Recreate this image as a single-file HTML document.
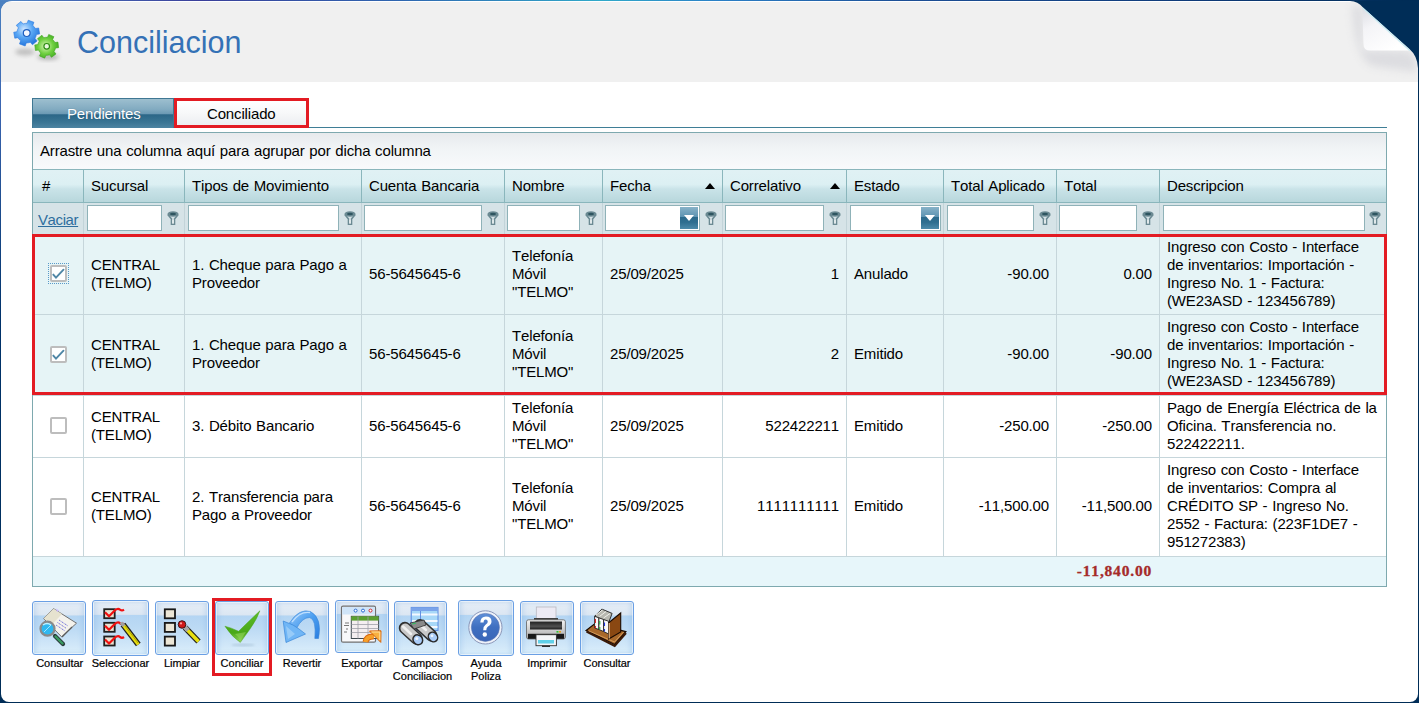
<!DOCTYPE html>
<html><head><meta charset="utf-8">
<style>
*{box-sizing:border-box;margin:0;padding:0}
html,body{width:1419px;height:703px;overflow:hidden;background:#002d57;font-family:"Liberation Sans",sans-serif;font-kerning:none}
.a{position:absolute}
.t{position:absolute;font-size:15px;letter-spacing:-0.15px;word-spacing:0.7px;color:#000;white-space:nowrap;line-height:18px}
#page{position:absolute;left:1px;top:1px;width:1417px;height:701px;background:#fff;border-radius:11px 0 8px 8px;overflow:hidden}
#hdr{position:absolute;left:0;top:1px;width:1417px;height:80px;background:#f0f0f0}
#ledge{position:absolute;left:0;top:0;width:1px;height:703px;background:linear-gradient(#4a80c0 0,#3a64b0 110px,#1a4a8a 220px,#00326a 320px,#002d57 703px)}
#tlc{position:absolute;left:0;top:0;width:14px;height:14px;background:#4a80c0}
#topline{position:absolute;left:0;top:0;width:1419px;height:1px;background:linear-gradient(90deg,#4d84c4 0,#3a3f9a 200px,#2e66b0 400px,#30a9c9 600px,#2a7fc6 720px,#1c4f96 900px,#0e3a78 1200px,#002d57 1419px)}
#title{position:absolute;left:77px;top:24px;font-size:30.5px;line-height:36px;color:#3471b6;white-space:nowrap}
.tabP{position:absolute;left:32px;top:98px;width:142px;height:30px;background:linear-gradient(#9dbfcf 0,#82abc1 35%,#6a98b3 52%,#2b6687 54%,#3a7594 80%,#4d84a2 100%);border:1px solid #3f7793;border-bottom:none}
.tabC{position:absolute;left:174px;top:98px;width:135px;height:30px;border:3px solid #e31b23;background:linear-gradient(#ffffff 0,#f7f8f9 50%,#eceef1 100%)}
.tabline{position:absolute;left:309px;top:127px;width:1078px;height:1px;background:#3f7e96}
.grid{position:absolute;left:32px;top:132px;width:1355px;height:455px;border:1px solid #7ea9af;background:#fff}
.grp{position:absolute;left:33px;top:133px;width:1353px;height:36px;background:linear-gradient(#e7eaed 0,#f1f4f6 45%,#f8fafc 100%)}
.hrow{position:absolute;left:33px;top:169px;width:1353px;height:34px;border-top:1px solid #8ab6bc;border-bottom:1px solid #8ab6bc;background:linear-gradient(#e0f1f4 0,#dcf0f3 45%,#c9e3e8 60%,#b8d7dc 100%)}
.frow{position:absolute;left:33px;top:203px;width:1353px;height:31px;background:#d6e3e7}
.hdiv{position:absolute;top:170px;width:1px;height:32px;background:#8ab6bc}
.fdiv{position:absolute;top:203px;width:1px;height:31px;background:#c3d4d9}
.inp{position:absolute;top:205px;height:26px;background:#fff;border:1px solid #8fb2b8}
.dd{position:absolute;top:207px;width:18px;height:22px;background:linear-gradient(#88b2c8 0,#5e94b2 44%,#2b6a8c 47%,#2f6e90 70%,#4c8aaa 100%);}
.dd:after{content:"";position:absolute;left:4px;top:8px;border-left:5px solid transparent;border-right:5px solid transparent;border-top:6px solid #fff}
.sort{position:absolute;top:183px;width:0;height:0;border-left:5px solid transparent;border-right:5px solid transparent;border-bottom:6px solid #000}
.row{position:absolute;left:33px;width:1353px}
.rl{position:absolute;left:33px;width:1353px;height:1px;background:#c6d6db}
.cdiv{position:absolute;width:1px;background:#c6d6db}
.red{position:absolute;border:3px solid #e31b23}
.cb{position:absolute;left:50px;width:17px;height:17px;border:2px solid #bdbdbd;border-radius:2px;background:#fff}
.foot{position:absolute;left:33px;top:557px;width:1353px;height:29px;background:#e7f6fa}
.btn{position:absolute;border:1px solid #6a9fe4;border-radius:3px;background:linear-gradient(#e6eef7 0,#dce7f3 24%,#d6e3f0 25.5%,#b4d5f3 26.5%,#bcdaf4 50%,#d2e8f9 85%,#dcf0fb 100%);box-shadow:inset 0 0 0 1px rgba(255,255,255,.55),inset 3px 0 4px rgba(120,170,225,.25),inset -3px 0 4px rgba(120,170,225,.25)}
.lbl{position:absolute;-webkit-text-stroke:0.2px #000;font-size:11px;line-height:12.5px;color:#000;text-align:center;white-space:nowrap}
</style></head><body>
<div id="tlc"></div><div id="ledge"></div><div id="topline"></div>
<div id="page"><div id="hdr"></div></div>
<div id="title">Conciliacion</div>
<svg class="a" style="left:10px;top:15px" width="55" height="50" viewBox="0 0 55 50">
<defs>
<radialGradient id="gb" cx="0.4" cy="0.35" r="0.7"><stop offset="0" stop-color="#cfe6ff"/><stop offset="0.45" stop-color="#5aa8f5"/><stop offset="1" stop-color="#1f6fd8"/></radialGradient>
<radialGradient id="gg" cx="0.45" cy="0.5" r="0.7"><stop offset="0" stop-color="#d9f5b8"/><stop offset="0.45" stop-color="#6fd040"/><stop offset="1" stop-color="#2e9a12"/></radialGradient>
<filter id="bl" x="-50%" y="-50%" width="200%" height="200%"><feGaussianBlur stdDeviation="2.2"/></filter>
</defs>
<ellipse cx="15" cy="37" rx="10" ry="3.5" fill="#9a9a9a" opacity="0.55" filter="url(#bl)"/>
<ellipse cx="38" cy="42" rx="11" ry="3" fill="#8a8a8a" opacity="0.6" filter="url(#bl)"/>
<path d="M24.40 12.03 L25.37 13.54 L28.65 12.97 L29.67 18.95 L26.40 19.51 L25.98 21.25 L25.80 21.73 L24.99 23.33 L27.11 25.88 L22.45 29.76 L20.33 27.20 L18.61 27.71 L18.10 27.80 L16.31 27.89 L15.17 31.01 L9.48 28.91 L10.63 25.80 L9.33 24.56 L9.00 24.17 L8.03 22.66 L4.75 23.23 L3.73 17.25 L7.00 16.69 L7.42 14.95 L7.60 14.47 L8.41 12.87 L6.29 10.32 L10.95 6.44 L13.07 9.00 L14.79 8.49 L15.30 8.40 L17.09 8.31 L18.23 5.19 L23.92 7.29 L22.77 10.40 L24.07 11.64Z" fill="url(#gb)" stroke="#2a78e0" stroke-width="0.6"/>
<circle cx="16.7" cy="18.1" r="3.4" fill="#f4f8ff" stroke="#1e5fc0" stroke-width="1.2"/>
<path d="M44.04 26.09 L44.87 27.51 L47.95 27.12 L48.62 32.68 L45.53 33.04 L45.07 34.62 L44.88 35.05 L44.06 36.48 L45.94 38.95 L41.46 42.32 L39.61 39.82 L38.01 40.20 L37.54 40.26 L35.90 40.26 L34.69 43.13 L29.54 40.93 L30.78 38.08 L29.64 36.89 L29.36 36.51 L28.53 35.09 L25.45 35.48 L24.78 29.92 L27.87 29.56 L28.33 27.98 L28.52 27.55 L29.34 26.12 L27.46 23.65 L31.94 20.28 L33.79 22.78 L35.39 22.40 L35.86 22.34 L37.50 22.34 L38.71 19.47 L43.86 21.67 L42.62 24.52 L43.76 25.71Z" fill="url(#gg)" stroke="#3aa41c" stroke-width="0.6"/>
<circle cx="36.7" cy="31.3" r="2.8" fill="#eaf8e0" stroke="#2a8a10" stroke-width="1.2"/>
</svg>
<svg class="a" style="left:1330px;top:0px" width="89" height="90" viewBox="0 0 89 90">
<defs>
<linearGradient id="fl" x1="0" y1="0" x2="0.6" y2="1"><stop offset="0" stop-color="#dcdde3"/><stop offset="0.4" stop-color="#f4f4f7"/><stop offset="1" stop-color="#ffffff"/></linearGradient>
<linearGradient id="shl" x1="0" y1="0" x2="1" y2="0"><stop offset="0" stop-color="#f0f0f0" stop-opacity="0"/><stop offset="1" stop-color="#cfd0d6"/></linearGradient>
<linearGradient id="shb" x1="0" y1="0" x2="0" y2="1"><stop offset="0" stop-color="#c9cad2"/><stop offset="1" stop-color="#f0f0f0" stop-opacity="0"/></linearGradient>
<filter id="cb" x="-30%" y="-30%" width="160%" height="160%"><feGaussianBlur stdDeviation="4"/></filter>
</defs>
<path d="M22 4 L33 7.5 L33 50 L80 51 Q87 58 87 72 L42 66 Q24 58 22 4Z" fill="#c4c5cd" opacity="0.45" filter="url(#cb)"/>
<path d="M18 1 L89 0 L89 90 L88 90 L88 68 Q87.5 56 79.5 49 L33 7.5 Q28 1.3 20 1Z" fill="#002d57"/>
<path d="M32.3 7.6 L79.7 50.6 L40 50.6 Q33.5 50.6 33.5 44 Z" fill="url(#fl)"/>
<path d="M32.3 7.6 L79.7 50.6" stroke="#c6ecf3" stroke-width="1.2"/>
</svg>
<div class="tabP"></div><div class="t" style="left:67px;top:105px;color:#fff;text-shadow:0 0 1px rgba(10,50,80,.5)">Pendientes</div>
<div class="tabC"></div><div class="t" style="left:207px;top:105px">Conciliado</div>
<div class="tabline"></div>
<div class="grid"></div><div class="grp"></div>
<div class="t" style="left:40px;top:142px">Arrastre una columna aquí para agrupar por dicha columna</div>
<div class="hrow"></div><div class="frow"></div>
<div class="t" style="left:42px;top:177px">#</div>
<div class="t" style="left:91px;top:177px">Sucursal</div>
<div class="t" style="left:192px;top:177px">Tipos de Movimiento</div>
<div class="t" style="left:369px;top:177px">Cuenta Bancaria</div>
<div class="t" style="left:512px;top:177px">Nombre</div>
<div class="t" style="left:610px;top:177px">Fecha</div>
<div class="t" style="left:730px;top:177px">Correlativo</div>
<div class="t" style="left:854px;top:177px">Estado</div>
<div class="t" style="left:951px;top:177px">Total Aplicado</div>
<div class="t" style="left:1064px;top:177px">Total</div>
<div class="t" style="left:1167px;top:177px">Descripcion</div>
<div class="hdiv" style="left:83px"></div>
<div class="fdiv" style="left:83px"></div>
<div class="hdiv" style="left:184px"></div>
<div class="fdiv" style="left:184px"></div>
<div class="hdiv" style="left:361px"></div>
<div class="fdiv" style="left:361px"></div>
<div class="hdiv" style="left:504px"></div>
<div class="fdiv" style="left:504px"></div>
<div class="hdiv" style="left:602px"></div>
<div class="fdiv" style="left:602px"></div>
<div class="hdiv" style="left:722px"></div>
<div class="fdiv" style="left:722px"></div>
<div class="hdiv" style="left:846px"></div>
<div class="fdiv" style="left:846px"></div>
<div class="hdiv" style="left:943px"></div>
<div class="fdiv" style="left:943px"></div>
<div class="hdiv" style="left:1056px"></div>
<div class="fdiv" style="left:1056px"></div>
<div class="hdiv" style="left:1159px"></div>
<div class="fdiv" style="left:1159px"></div>
<div class="sort" style="left:705px"></div><div class="sort" style="left:830px"></div>
<div class="t" style="left:38px;top:211px;color:#2e6e9e;text-decoration:underline;letter-spacing:-0.4px">Vaciar</div>
<div class="inp" style="left:87px;width:75px"></div>
<svg class="a" style="left:167px;top:211px" width="12" height="14" viewBox="0 0 12 14"><ellipse cx="6" cy="3" rx="5.5" ry="2.8" fill="#6b8a93"/><ellipse cx="6" cy="3" rx="3" ry="1.3" fill="#2e5560"/><path d="M0.8 3.5 L4.5 8 L4.5 13.2 L7.5 13.2 L7.5 8 L11.2 3.5" fill="none" stroke="#6b8a93" stroke-width="1.6"/><path d="M5 8.5 V12.5 H7 V8.5Z" fill="#dfe8ea"/></svg>
<div class="inp" style="left:188px;width:151px"></div>
<svg class="a" style="left:344px;top:211px" width="12" height="14" viewBox="0 0 12 14"><ellipse cx="6" cy="3" rx="5.5" ry="2.8" fill="#6b8a93"/><ellipse cx="6" cy="3" rx="3" ry="1.3" fill="#2e5560"/><path d="M0.8 3.5 L4.5 8 L4.5 13.2 L7.5 13.2 L7.5 8 L11.2 3.5" fill="none" stroke="#6b8a93" stroke-width="1.6"/><path d="M5 8.5 V12.5 H7 V8.5Z" fill="#dfe8ea"/></svg>
<div class="inp" style="left:364px;width:118px"></div>
<svg class="a" style="left:487px;top:211px" width="12" height="14" viewBox="0 0 12 14"><ellipse cx="6" cy="3" rx="5.5" ry="2.8" fill="#6b8a93"/><ellipse cx="6" cy="3" rx="3" ry="1.3" fill="#2e5560"/><path d="M0.8 3.5 L4.5 8 L4.5 13.2 L7.5 13.2 L7.5 8 L11.2 3.5" fill="none" stroke="#6b8a93" stroke-width="1.6"/><path d="M5 8.5 V12.5 H7 V8.5Z" fill="#dfe8ea"/></svg>
<div class="inp" style="left:507px;width:73px"></div>
<svg class="a" style="left:585px;top:211px" width="12" height="14" viewBox="0 0 12 14"><ellipse cx="6" cy="3" rx="5.5" ry="2.8" fill="#6b8a93"/><ellipse cx="6" cy="3" rx="3" ry="1.3" fill="#2e5560"/><path d="M0.8 3.5 L4.5 8 L4.5 13.2 L7.5 13.2 L7.5 8 L11.2 3.5" fill="none" stroke="#6b8a93" stroke-width="1.6"/><path d="M5 8.5 V12.5 H7 V8.5Z" fill="#dfe8ea"/></svg>
<div class="inp" style="left:605px;width:95px"></div>
<div class="dd" style="left:680px"></div>
<svg class="a" style="left:705px;top:211px" width="12" height="14" viewBox="0 0 12 14"><ellipse cx="6" cy="3" rx="5.5" ry="2.8" fill="#6b8a93"/><ellipse cx="6" cy="3" rx="3" ry="1.3" fill="#2e5560"/><path d="M0.8 3.5 L4.5 8 L4.5 13.2 L7.5 13.2 L7.5 8 L11.2 3.5" fill="none" stroke="#6b8a93" stroke-width="1.6"/><path d="M5 8.5 V12.5 H7 V8.5Z" fill="#dfe8ea"/></svg>
<div class="inp" style="left:725px;width:99px"></div>
<svg class="a" style="left:829px;top:211px" width="12" height="14" viewBox="0 0 12 14"><ellipse cx="6" cy="3" rx="5.5" ry="2.8" fill="#6b8a93"/><ellipse cx="6" cy="3" rx="3" ry="1.3" fill="#2e5560"/><path d="M0.8 3.5 L4.5 8 L4.5 13.2 L7.5 13.2 L7.5 8 L11.2 3.5" fill="none" stroke="#6b8a93" stroke-width="1.6"/><path d="M5 8.5 V12.5 H7 V8.5Z" fill="#dfe8ea"/></svg>
<div class="inp" style="left:850px;width:91px"></div>
<div class="dd" style="left:921px"></div>
<div class="inp" style="left:947px;width:87px"></div>
<svg class="a" style="left:1039px;top:211px" width="12" height="14" viewBox="0 0 12 14"><ellipse cx="6" cy="3" rx="5.5" ry="2.8" fill="#6b8a93"/><ellipse cx="6" cy="3" rx="3" ry="1.3" fill="#2e5560"/><path d="M0.8 3.5 L4.5 8 L4.5 13.2 L7.5 13.2 L7.5 8 L11.2 3.5" fill="none" stroke="#6b8a93" stroke-width="1.6"/><path d="M5 8.5 V12.5 H7 V8.5Z" fill="#dfe8ea"/></svg>
<div class="inp" style="left:1059px;width:78px"></div>
<svg class="a" style="left:1142px;top:211px" width="12" height="14" viewBox="0 0 12 14"><ellipse cx="6" cy="3" rx="5.5" ry="2.8" fill="#6b8a93"/><ellipse cx="6" cy="3" rx="3" ry="1.3" fill="#2e5560"/><path d="M0.8 3.5 L4.5 8 L4.5 13.2 L7.5 13.2 L7.5 8 L11.2 3.5" fill="none" stroke="#6b8a93" stroke-width="1.6"/><path d="M5 8.5 V12.5 H7 V8.5Z" fill="#dfe8ea"/></svg>
<div class="inp" style="left:1163px;width:202px"></div>
<svg class="a" style="left:1369px;top:211px" width="12" height="14" viewBox="0 0 12 14"><ellipse cx="6" cy="3" rx="5.5" ry="2.8" fill="#6b8a93"/><ellipse cx="6" cy="3" rx="3" ry="1.3" fill="#2e5560"/><path d="M0.8 3.5 L4.5 8 L4.5 13.2 L7.5 13.2 L7.5 8 L11.2 3.5" fill="none" stroke="#6b8a93" stroke-width="1.6"/><path d="M5 8.5 V12.5 H7 V8.5Z" fill="#dfe8ea"/></svg>
<div class="row" style="top:235px;height:79px;background:#e6f4f6"></div>
<div class="rl" style="top:314px"></div>
<div class="cdiv" style="left:83px;top:234px;height:81px"></div>
<div class="cdiv" style="left:184px;top:234px;height:81px"></div>
<div class="cdiv" style="left:361px;top:234px;height:81px"></div>
<div class="cdiv" style="left:504px;top:234px;height:81px"></div>
<div class="cdiv" style="left:602px;top:234px;height:81px"></div>
<div class="cdiv" style="left:722px;top:234px;height:81px"></div>
<div class="cdiv" style="left:846px;top:234px;height:81px"></div>
<div class="cdiv" style="left:943px;top:234px;height:81px"></div>
<div class="cdiv" style="left:1056px;top:234px;height:81px"></div>
<div class="cdiv" style="left:1159px;top:234px;height:81px"></div>
<div class="cb" style="top:265.0px"></div>
<svg class="a" style="left:50px;top:265.0px" width="17" height="17" viewBox="0 0 17 17"><path d="M3.3 9.6 L6 12.6 L13.5 4.7" fill="none" stroke="#4f87a6" stroke-width="1.9" stroke-linecap="round"/></svg>
<div class="a" style="left:48px;top:263.0px;width:21px;height:21px;border:1px dotted #5a9ac8"></div>
<div class="t" style="left:91px;top:255.5px">CENTRAL<br>(TELMO)</div>
<div class="t" style="left:192px;top:255.5px">1. Cheque para Pago a<br>Proveedor</div>
<div class="t" style="left:369px;top:264.5px">56-5645645-6</div>
<div class="t" style="left:512px;top:246.5px">Telefonía<br>Móvil<br>"TELMO"</div>
<div class="t" style="left:610px;top:264.5px">25/09/2025</div>
<div class="t" style="right:580px;top:264.5px;text-align:right">1</div>
<div class="t" style="left:854px;top:264.5px">Anulado</div>
<div class="t" style="right:370px;top:264.5px;text-align:right">-90.00</div>
<div class="t" style="right:267px;top:264.5px;text-align:right">0.00</div>
<div class="t" style="left:1167px;top:237.5px">Ingreso con Costo - Interface<br>de inventarios: Importación -<br>Ingreso No. 1 - Factura:<br>(WE23ASD - 123456789)</div>
<div class="row" style="top:315px;height:80px;background:#e6f4f6"></div>
<div class="rl" style="top:395px"></div>
<div class="cdiv" style="left:83px;top:314px;height:82px"></div>
<div class="cdiv" style="left:184px;top:314px;height:82px"></div>
<div class="cdiv" style="left:361px;top:314px;height:82px"></div>
<div class="cdiv" style="left:504px;top:314px;height:82px"></div>
<div class="cdiv" style="left:602px;top:314px;height:82px"></div>
<div class="cdiv" style="left:722px;top:314px;height:82px"></div>
<div class="cdiv" style="left:846px;top:314px;height:82px"></div>
<div class="cdiv" style="left:943px;top:314px;height:82px"></div>
<div class="cdiv" style="left:1056px;top:314px;height:82px"></div>
<div class="cdiv" style="left:1159px;top:314px;height:82px"></div>
<div class="cb" style="top:345.5px"></div>
<svg class="a" style="left:50px;top:345.5px" width="17" height="17" viewBox="0 0 17 17"><path d="M3.3 9.6 L6 12.6 L13.5 4.7" fill="none" stroke="#4f87a6" stroke-width="1.9" stroke-linecap="round"/></svg>
<div class="t" style="left:91px;top:336.0px">CENTRAL<br>(TELMO)</div>
<div class="t" style="left:192px;top:336.0px">1. Cheque para Pago a<br>Proveedor</div>
<div class="t" style="left:369px;top:345.0px">56-5645645-6</div>
<div class="t" style="left:512px;top:327.0px">Telefonía<br>Móvil<br>"TELMO"</div>
<div class="t" style="left:610px;top:345.0px">25/09/2025</div>
<div class="t" style="right:580px;top:345.0px;text-align:right">2</div>
<div class="t" style="left:854px;top:345.0px">Emitido</div>
<div class="t" style="right:370px;top:345.0px;text-align:right">-90.00</div>
<div class="t" style="right:267px;top:345.0px;text-align:right">-90.00</div>
<div class="t" style="left:1167px;top:318.0px">Ingreso con Costo - Interface<br>de inventarios: Importación -<br>Ingreso No. 1 - Factura:<br>(WE23ASD - 123456789)</div>
<div class="row" style="top:396px;height:61px;background:#fff"></div>
<div class="rl" style="top:457px"></div>
<div class="cdiv" style="left:83px;top:395px;height:63px"></div>
<div class="cdiv" style="left:184px;top:395px;height:63px"></div>
<div class="cdiv" style="left:361px;top:395px;height:63px"></div>
<div class="cdiv" style="left:504px;top:395px;height:63px"></div>
<div class="cdiv" style="left:602px;top:395px;height:63px"></div>
<div class="cdiv" style="left:722px;top:395px;height:63px"></div>
<div class="cdiv" style="left:846px;top:395px;height:63px"></div>
<div class="cdiv" style="left:943px;top:395px;height:63px"></div>
<div class="cdiv" style="left:1056px;top:395px;height:63px"></div>
<div class="cdiv" style="left:1159px;top:395px;height:63px"></div>
<div class="cb" style="top:417.0px"></div>
<div class="t" style="left:91px;top:407.5px">CENTRAL<br>(TELMO)</div>
<div class="t" style="left:192px;top:416.5px">3. Débito Bancario</div>
<div class="t" style="left:369px;top:416.5px">56-5645645-6</div>
<div class="t" style="left:512px;top:398.5px">Telefonía<br>Móvil<br>"TELMO"</div>
<div class="t" style="left:610px;top:416.5px">25/09/2025</div>
<div class="t" style="right:580px;top:416.5px;text-align:right">522422211</div>
<div class="t" style="left:854px;top:416.5px">Emitido</div>
<div class="t" style="right:370px;top:416.5px;text-align:right">-250.00</div>
<div class="t" style="right:267px;top:416.5px;text-align:right">-250.00</div>
<div class="t" style="left:1167px;top:398.5px">Pago de Energía Eléctrica de la<br>Oficina. Transferencia no.<br>522422211.</div>
<div class="row" style="top:458px;height:98px;background:#fff"></div>
<div class="rl" style="top:556px"></div>
<div class="cdiv" style="left:83px;top:457px;height:100px"></div>
<div class="cdiv" style="left:184px;top:457px;height:100px"></div>
<div class="cdiv" style="left:361px;top:457px;height:100px"></div>
<div class="cdiv" style="left:504px;top:457px;height:100px"></div>
<div class="cdiv" style="left:602px;top:457px;height:100px"></div>
<div class="cdiv" style="left:722px;top:457px;height:100px"></div>
<div class="cdiv" style="left:846px;top:457px;height:100px"></div>
<div class="cdiv" style="left:943px;top:457px;height:100px"></div>
<div class="cdiv" style="left:1056px;top:457px;height:100px"></div>
<div class="cdiv" style="left:1159px;top:457px;height:100px"></div>
<div class="cb" style="top:497.5px"></div>
<div class="t" style="left:91px;top:488.0px">CENTRAL<br>(TELMO)</div>
<div class="t" style="left:192px;top:488.0px">2. Transferencia para<br>Pago a Proveedor</div>
<div class="t" style="left:369px;top:497.0px">56-5645645-6</div>
<div class="t" style="left:512px;top:479.0px">Telefonía<br>Móvil<br>"TELMO"</div>
<div class="t" style="left:610px;top:497.0px">25/09/2025</div>
<div class="t" style="right:580px;top:497.0px;text-align:right">1111111111</div>
<div class="t" style="left:854px;top:497.0px">Emitido</div>
<div class="t" style="right:370px;top:497.0px;text-align:right">-11,500.00</div>
<div class="t" style="right:267px;top:497.0px;text-align:right">-11,500.00</div>
<div class="t" style="left:1167px;top:461.0px">Ingreso con Costo - Interface<br>de inventarios: Compra al<br>CRÉDITO SP - Ingreso No.<br>2552 - Factura: (223F1DE7 -<br>951272383)</div>
<div class="foot"></div>
<div class="a" style="right:267px;top:562px;font-family:'Liberation Serif',serif;font-weight:bold;font-size:15.5px;letter-spacing:0.8px;line-height:18px;color:#a52a2a;-webkit-text-stroke:0.3px #a52a2a">-11,840.00</div>
<div class="red" style="left:32px;top:234px;width:1355px;height:161px"></div>
<div class="btn" style="left:32px;top:601px;width:54px;height:54px"></div>
<svg class="a" style="left:32px;top:601px" width="54" height="54" viewBox="0 0 54 54">
<path d="M21.6 7.7 L44.5 22.2 L29.6 35.8 L11.6 17.5Z" fill="#f4f2ec" stroke="#707070" stroke-width="1"/>
<path d="M21.6 7.7 L30 13 L20 23.5 L11.6 17.5Z" fill="#e6e2cf"/>
<path d="M24 7.5 L27 9.4 L25 11Z" fill="#c8b8ff"/>
<path d="M27 19 L36 25 M25.5 21.5 L34.5 27.5 M24 24 L33 30" stroke="#6a6ad8" stroke-width="0.9" stroke-dasharray="1.2 0.6"/>
<path d="M30 36 L40 26" stroke="#5a5a5a" stroke-width="1.2"/>
<path d="M23 35 L31 43" stroke="#2a3a3a" stroke-width="4.2" stroke-linecap="round"/>
<path d="M23.5 35.5 L30.5 42.5" stroke="#3a9a60" stroke-width="2.4" stroke-linecap="round"/>
<circle cx="15.5" cy="27.7" r="7" fill="#30b8f0" stroke="#8a8a8a" stroke-width="2.2"/>
<path d="M11 24 Q15 21 19 24" stroke="#bff0ff" stroke-width="1.5" fill="none"/>
<path d="M12 31 L19 24" stroke="#9fe6ff" stroke-width="1"/>
</svg>
<div class="lbl" style="left:19.7px;width:80px;top:657px">Consultar</div>
<div class="btn" style="left:92px;top:600px;width:57px;height:56px"></div>
<svg class="a" style="left:92px;top:600px" width="57" height="56" viewBox="0 0 57 56"><rect x="12.2" y="9.2" width="10.5" height="9" fill="#e8e2d2" stroke="#202020" stroke-width="1.8"/><path d="M13 12.2 L17 16.2 L23 10.2 Q26 7.699999999999999 28 9.7 Q30 11.2 32 9.7" fill="none" stroke="#f01010" stroke-width="2.2" stroke-linejoin="round"/><rect x="12.2" y="22.8" width="10.5" height="9" fill="#e8e2d2" stroke="#202020" stroke-width="1.8"/><path d="M13 25.8 L17 29.8 L23 23.8 Q26 21.3 28 23.3 Q30 24.8 32 23.3" fill="none" stroke="#f01010" stroke-width="2.2" stroke-linejoin="round"/><rect x="12.2" y="36.5" width="10.5" height="9" fill="#e8e2d2" stroke="#202020" stroke-width="1.8"/><path d="M13 39.5 L17 43.5 L23 37.5 Q26 35 28 37 Q30 38.5 32 37" fill="none" stroke="#f01010" stroke-width="2.2" stroke-linejoin="round"/>
<path d="M31 24.5 L46.3 44.5" stroke="#202020" stroke-width="6" stroke-linecap="butt"/>
<path d="M31.5 25.2 L46.3 44.5" stroke="#e6dc10" stroke-width="3.4"/>
<path d="M33 26 L46 43" stroke="#a09800" stroke-width="0.8"/>
<path d="M29 22.5 L32 26" stroke="#a0a0a0" stroke-width="3.4"/>
</svg>
<div class="lbl" style="left:80.5px;width:80px;top:657px">Seleccionar</div>
<div class="btn" style="left:155px;top:601px;width:54px;height:54px"></div>
<svg class="a" style="left:155px;top:601px" width="54" height="54" viewBox="0 0 54 54"><rect x="9.8" y="8.3" width="10.2" height="9" fill="#ece6d6" stroke="#181818" stroke-width="1.8"/><rect x="9.8" y="21.900000000000002" width="10.2" height="9" fill="#ece6d6" stroke="#181818" stroke-width="1.8"/><rect x="9.8" y="35.6" width="10.2" height="9" fill="#ece6d6" stroke="#181818" stroke-width="1.8"/>
<path d="M30 26.5 L43.5 40.5" stroke="#202020" stroke-width="6"/>
<path d="M30.5 27 L43.5 40.5" stroke="#e8e010" stroke-width="3.6"/>
<path d="M29 25 L33 29.5" stroke="#a8a8a8" stroke-width="4.4"/>
<circle cx="27" cy="23.5" r="3.8" fill="#d01818" stroke="#301010" stroke-width="0.9"/>
<circle cx="26" cy="22.4" r="1.1" fill="#ff9a9a"/>
</svg>
<div class="lbl" style="left:142.0px;width:80px;top:657px">Limpiar</div>
<div class="btn" style="left:215px;top:601px;width:54px;height:54px"></div>
<svg class="a" style="left:215px;top:601px" width="54" height="54" viewBox="0 0 54 54">
<defs><linearGradient id="gck" x1="0" y1="0" x2="0" y2="1"><stop offset="0" stop-color="#5cbc28"/><stop offset="0.7" stop-color="#49a818"/><stop offset="1" stop-color="#9ad860"/></linearGradient>
<filter id="ckb"><feGaussianBlur stdDeviation="1.2"/></filter></defs>
<ellipse cx="28" cy="44" rx="12" ry="1.5" fill="#9ab6cc" opacity="0.5" filter="url(#ckb)"/>
<path d="M9.9 25.2 Q17 27 23.6 30.3 Q35 19 44.9 9.8 Q42 18 35 28 Q30 35 25.3 41.4 Q17 36 9.9 25.2 Z" fill="url(#gck)" stroke="#4aa420" stroke-width="0.5"/><path d="M20 33 Q24 36 25.3 40 Q28 35 31 31" fill="#8fd458" opacity="0.6"/>
</svg>
<div class="lbl" style="left:202.0px;width:80px;top:657px">Conciliar</div>
<div class="btn" style="left:275px;top:601px;width:54px;height:54px"></div>
<svg class="a" style="left:275px;top:601px" width="54" height="54" viewBox="0 0 54 54">
<defs><linearGradient id="grv" x1="0" y1="0" x2="1" y2="1"><stop offset="0" stop-color="#9ccaf8"/><stop offset="0.5" stop-color="#4a9ef0"/><stop offset="1" stop-color="#2a7ee0"/></linearGradient></defs>
<path d="M43.5 37.5 Q47.5 17 35.5 10.5 Q24 7 14.5 22 L21.5 27.5 Q27 16.5 34.5 16.5 Q41.5 18 39.8 37.5 Z" fill="url(#grv)" stroke="#3a86d8" stroke-width="0.6"/><path d="M17 21 Q25 10 35 11.5" stroke="#c0e0ff" stroke-width="1.3" fill="none"/>
<path d="M8.2 20 L11 41.5 L30.5 33 L24 28 L18 24 Z" fill="#70b6f6" stroke="#3a86d8" stroke-width="0.7"/>
<path d="M11 25 L13 38 L20 33Z" fill="#a8d4fa" opacity="0.7"/>
</svg>
<div class="lbl" style="left:262.0px;width:80px;top:657px">Revertir</div>
<div class="btn" style="left:335px;top:600px;width:54px;height:53px"></div>
<svg class="a" style="left:335px;top:600px" width="54" height="53" viewBox="0 0 54 53">
<rect x="6.5" y="6.2" width="34" height="36" rx="1.5" fill="#f8f8fa" stroke="#707070" stroke-width="1.2"/>
<rect x="7.2" y="7" width="32.6" height="7.5" fill="#cfe4f8"/>
<circle cx="20.6" cy="10.6" r="1.5" fill="#fff" stroke="#2a6ad0" stroke-width="1"/>
<circle cx="28" cy="10.6" r="1.5" fill="#fff" stroke="#2a6ad0" stroke-width="1"/>
<circle cx="35.5" cy="10.6" r="1.5" fill="#fff" stroke="#d02a2a" stroke-width="1"/>
<path d="M10 23 H14 M9 25.5 H14 M11 29 H13 M9 32 H12" stroke="#6a6a6a" stroke-width="0.9"/>
<rect x="16.3" y="16.3" width="27.3" height="22.2" fill="#f4eef0" stroke="#404a50" stroke-width="1"/>
<rect x="16.3" y="16.3" width="27.3" height="4.3" fill="#5aa030"/>
<path d="M16.5 24.5 H43.5 M16.5 28.5 H43.5 M16.5 32.5 H43.5 M23 16.5 V38.5 M33 16.5 V38.5" stroke="#a0a0a8" stroke-width="0.8"/>
<path d="M30.5 42 Q31.5 36 39 36.5" stroke="#d8640c" stroke-width="6" fill="none"/>
<path d="M30.5 42 Q31.5 36 39 36.5" stroke="#f6a02a" stroke-width="4" fill="none"/>
<path d="M34.5 31 L46 30.8 L45.8 42.4 Z" fill="#f8b040" stroke="#d8640c" stroke-width="1"/>
<path d="M36.5 32 L44.8 32 L44.8 40" stroke="#ffe0a0" stroke-width="1" fill="none"/>
</svg>
<div class="lbl" style="left:322.0px;width:80px;top:657px">Exportar</div>
<div class="btn" style="left:394px;top:601px;width:53px;height:54px"></div>
<svg class="a" style="left:394px;top:601px" width="53" height="54" viewBox="0 0 53 54">
<rect x="17.2" y="6.4" width="26.8" height="23" fill="#a8d8f8" stroke="#5a88e0" stroke-width="1"/>
<rect x="17.2" y="6.4" width="26.8" height="3.6" fill="#7aa4ea"/>
<path d="M18 13.5 H43.5 M18 20 H43.5 M18 26 H43.5" stroke="#f4f8ff" stroke-width="2.2"/>
<path d="M26.5 10 V29" stroke="#5a88e0" stroke-width="0.9"/>
<path d="M11 27 L22.5 37.5" stroke="#303030" stroke-width="12.5" stroke-linecap="round"/>
<path d="M11.2 27.2 L22.5 37.5" stroke="#c8c8c8" stroke-width="9.5" stroke-linecap="round"/>
<path d="M9 25.5 L17 33" stroke="#f0f0f0" stroke-width="2.5" stroke-linecap="round"/>
<path d="M26 24 L37.5 34.5" stroke="#303030" stroke-width="12" stroke-linecap="round"/>
<path d="M26.2 24.2 L37.5 34.5" stroke="#c8c8c8" stroke-width="9" stroke-linecap="round"/>
<path d="M25 22.5 L32 29" stroke="#f0f0f0" stroke-width="2.5" stroke-linecap="round"/>
<path d="M16 22 L30 19 L32 24 L20 28Z" fill="#8a8a8a" stroke="#303030" stroke-width="0.8"/>
<path d="M18 23 L22 22" stroke="#30c060" stroke-width="1.2"/>
<ellipse cx="23.8" cy="38.8" rx="4.6" ry="5.2" transform="rotate(-40 23.8 38.8)" fill="#aaccf8" stroke="#2a2a2a" stroke-width="1.5"/>
<ellipse cx="39" cy="36" rx="4.4" ry="5" transform="rotate(-40 39 36)" fill="#aaccf8" stroke="#2a2a2a" stroke-width="1.5"/>
<circle cx="22.8" cy="37.5" r="1.5" fill="#eef6ff"/>
<circle cx="38" cy="34.8" r="1.4" fill="#eef6ff"/>
</svg>
<div class="lbl" style="left:382.5px;width:80px;top:657px">Campos<br>Conciliacion</div>
<div class="btn" style="left:458px;top:600px;width:56px;height:56px"></div>
<svg class="a" style="left:458px;top:600px" width="56" height="56" viewBox="0 0 56 56">
<defs><linearGradient id="ghp" x1="0" y1="0" x2="0" y2="1"><stop offset="0" stop-color="#5f8fd8"/><stop offset="0.5" stop-color="#3f6fc0"/><stop offset="1" stop-color="#3a66b8"/></linearGradient></defs>
<circle cx="27.4" cy="27.4" r="16.6" fill="#eef2fa" stroke="#8a96b8" stroke-width="1"/>
<circle cx="27.4" cy="27.4" r="14" fill="url(#ghp)" stroke="#5a74b0" stroke-width="0.6"/>
<path d="M22.3 22.5 Q22.5 16.5 28 16.5 Q33.5 16.6 33.5 21.5 Q33.5 24.5 30 26.5 Q28.3 27.6 28.3 30.2 L25.2 30.2 Q25 26.5 27.5 24.8 Q29.8 23.3 29.8 21.8 Q29.6 19.5 27.7 19.5 Q25.6 19.6 25.6 22.5Z" fill="#fff"/>
<circle cx="26.8" cy="34.5" r="2.2" fill="#fff"/>
</svg>
<div class="lbl" style="left:446.0px;width:80px;top:657px">Ayuda<br>Poliza</div>
<div class="btn" style="left:520px;top:601px;width:54px;height:54px"></div>
<svg class="a" style="left:520px;top:601px" width="54" height="54" viewBox="0 0 54 54">
<defs><linearGradient id="gpr" x1="0" y1="0" x2="0" y2="1"><stop offset="0" stop-color="#f4f4f4"/><stop offset="0.5" stop-color="#d0d0d0"/><stop offset="1" stop-color="#a8a8a8"/></linearGradient>
<linearGradient id="gsl" x1="0" y1="0" x2="0" y2="1"><stop offset="0" stop-color="#202020"/><stop offset="0.6" stop-color="#505050"/><stop offset="1" stop-color="#202020"/></linearGradient></defs>
<rect x="16.3" y="6" width="19.7" height="13" fill="#eceaf4" stroke="#b8b8c0" stroke-width="0.8"/>
<path d="M14 17 H38 V20 H14Z" fill="#404040"/>
<rect x="6.5" y="18.8" width="38.9" height="19.2" rx="2" fill="url(#gpr)" stroke="#606060" stroke-width="0.8"/>
<rect x="10" y="20.5" width="32" height="8" fill="url(#gsl)"/>
<rect x="8" y="32.8" width="36" height="5" fill="#181818"/>
<rect x="36.5" y="30" width="2" height="1.6" fill="#30c030"/>
<rect x="39" y="30" width="2" height="1.6" fill="#e0a020"/>
<rect x="16" y="33.7" width="20.4" height="11" fill="#f4f6f8" stroke="#303030" stroke-width="0.9"/>
<rect x="18" y="39" width="16" height="3.5" fill="#60d0e8"/>
<rect x="22" y="44.5" width="8" height="1.5" fill="#303030"/>
</svg>
<div class="lbl" style="left:507.0px;width:80px;top:657px">Imprimir</div>
<div class="btn" style="left:580px;top:601px;width:54px;height:54px"></div>
<svg class="a" style="left:580px;top:601px" width="54" height="54" viewBox="0 0 54 54">
<path d="M6.1 29.4 L15 22.6 L45.8 30.7 L34.7 43.5 Z" fill="#a8682a" stroke="#1a0a00" stroke-width="1.3"/>
<path d="M6.5 30.5 L34.7 45 L46 32" stroke="#3a1a08" stroke-width="2" fill="none"/>
<path d="M8.5 29.8 L34.5 41 L43.5 31" stroke="#d8a060" stroke-width="0.9" fill="none"/>
<path d="M14.6 15.3 L21.9 8.1 L32.1 12.4 L28.7 21.7 Z" fill="#b8b8b0" stroke="#202020" stroke-width="0.9"/>
<path d="M16 14 L22.5 9 M19.5 15.5 L26 10.5 M23.5 17 L30 12.5" stroke="#f0f0ea" stroke-width="1"/>
<path d="M14.6 15.3 L18.9 16.8 L18.9 28.5 L14.6 27Z" fill="#fafafa" stroke="#202020" stroke-width="0.9"/>
<path d="M18.9 16.8 L23.6 18.5 L23.6 30.5 L18.9 28.5Z" fill="#fafafa" stroke="#202020" stroke-width="0.9"/>
<path d="M23.6 18.5 L28.7 20.3 L28.7 33 L23.6 30.5Z" fill="#fafafa" stroke="#202020" stroke-width="0.9"/>
<path d="M15.4 18 V22 M15.4 25 V27" stroke="#e02020" stroke-width="1.1"/>
<path d="M19.8 20 V23.5 M19.8 26 V28.5" stroke="#20b030" stroke-width="1.1"/>
<path d="M24.5 21.5 V25 M24.5 28 V30.5" stroke="#2038e0" stroke-width="1.1"/>
<path d="M28.7 21.7 L40.7 12 L40.7 31 L28.7 38Z" fill="#8a4812" stroke="#1a0a00" stroke-width="1.1"/>
<path d="M29.2 22 V37.5" stroke="#f2c898" stroke-width="1.1"/>
</svg>
<div class="lbl" style="left:567.0px;width:80px;top:657px">Consultar</div>
<div class="red" style="left:212px;top:598px;width:60px;height:78px"></div>
</body></html>
